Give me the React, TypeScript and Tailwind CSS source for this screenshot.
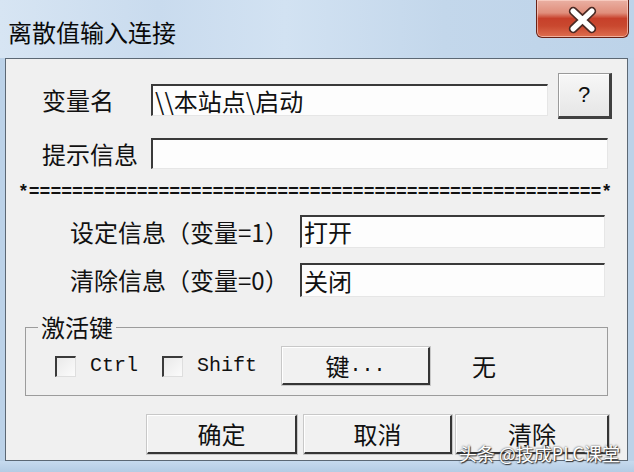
import React from "react";

const cjk = "font-['Noto_Sans_CJK_SC','Noto_Sans',sans-serif]";
const mono = "font-['Liberation_Mono',monospace]";

function Field({ w, h, text }: { w: string; h: string; text?: string }) {
  return (
    <div
      className={`${w} ${h} bg-[#fdfdfd] border-t-2 border-l-2 border-t-[#3a3a3a] border-l-[#3a3a3a] border-b border-r border-b-[#e6e6e6] border-r-[#e6e6e6] flex items-center pl-[2px] overflow-hidden`}
    >
      {text ? <span className="text-[24px] leading-[28px] text-[#111] whitespace-nowrap">{text}</span> : null}
    </div>
  );
}

function Btn({ w, label }: { w: string; label: string }) {
  return (
    <div
      className={`${w} h-[39px] bg-[#f1f1f1] border-t border-l border-t-[#ffffff] border-l-[#ffffff] border-b-2 border-r-2 border-b-[#353535] border-r-[#353535] shadow-[0_0_0_1px_#c8c8c8] flex items-center justify-center text-[24px] leading-[28px] text-[#111]`}
    >
      {label}
    </div>
  );
}

function CheckBox() {
  return (
    <div className="w-[21px] h-[21px] bg-[linear-gradient(135deg,#e9e9e9,#fbfbfb)] border-t-2 border-l-2 border-t-[#3a3a3a] border-l-[#3a3a3a] border-b border-r border-b-[#dedede] border-r-[#dedede]" />
  );
}

export default function App() {
  const sep = "*" + "=".repeat(53) + "*";
  return (
    <div className={`relative w-[634px] h-[472px] overflow-hidden bg-[#bcd2e8] flex flex-col ${cjk} text-[#111]`}>
      {/* Title bar */}
      <div className="h-[58px] flex items-start justify-between bg-[linear-gradient(90deg,#d7e5f3_0%,#c9dbee_25%,#d2e2f2_45%,#c3d7eb_70%,#bdd3e9_100%)]">
        <div className="pl-[8px] pt-[18px] text-[24px] leading-[28px] text-[#0a0a0a] whitespace-nowrap">
          离散值输入连接
        </div>
        <div className="mr-[5px] w-[93px] h-[38px] rounded-b-[6px] border border-t-0 border-[#6a2216] bg-[linear-gradient(180deg,#eab0a3_0%,#e08e7b_35%,#c7402a_50%,#c9482f_70%,#de6e4f_100%)] shadow-[inset_0_0_0_1px_rgba(255,220,210,0.6)] flex items-center justify-center">
          <svg width="93" height="38" viewBox="0 0 93 38">
            <path d="M37 11 L56 29 M56 11 L37 29" stroke="#4a2a24" strokeWidth="9" strokeLinecap="round" fill="none" />
            <path d="M37 11 L56 29 M56 11 L37 29" stroke="#ffffff" strokeWidth="5.5" strokeLinecap="round" fill="none" />
          </svg>
        </div>
      </div>

      {/* Client */}
      <div className="h-[403px] flex pl-[5px] pr-[6px]">
        <div className="flex-1 border border-[#5c6874] bg-[#f0f0f0] flex flex-col">
          {/* Row 1 */}
          <div className="mt-[14px] pl-[36px] flex items-start">
            <div className="w-[109px] h-[32px] mt-[11px] text-[24px] leading-[32px]">变量名</div>
            <div className="mt-[11px]">
              <Field w="w-[397px]" h="h-[32px]" text="\\本站点\启动" />
            </div>
            <div className="ml-[10px] w-[54px] h-[46px] bg-[linear-gradient(180deg,#f7f7f7,#e6e6e6)] border-t border-l border-t-[#9a9a9a] border-l-[#9a9a9a] border-b-[3px] border-r-[3px] border-b-[#404040] border-r-[#404040] shadow-[inset_1px_1px_0_#ffffff] flex items-center justify-center text-[22px] leading-[24px] font-['Liberation_Sans',sans-serif]">
              ?
            </div>
          </div>

          {/* Row 2 */}
          <div className="mt-[19px] pl-[36px] flex items-center">
            <div className="w-[109px] h-[31px] text-[24px] leading-[31px] whitespace-nowrap">提示信息</div>
            <Field w="w-[457px]" h="h-[31px]" />
          </div>

          {/* Separator */}
          <div className={`mt-[12px] pl-[12px] h-[22px] text-[18px] leading-[22px] font-bold ${mono} whitespace-nowrap`}>
            {sep}
          </div>

          {/* Row 3 */}
          <div className="mt-[12px] pl-[64px] flex items-center">
            <div className="w-[230px] text-[24px] leading-[33px] whitespace-nowrap">设定信息（变量=1）</div>
            <Field w="w-[305px]" h="h-[33px]" text="打开" />
          </div>

          {/* Row 4 */}
          <div className="mt-[15px] pl-[64px] flex items-center">
            <div className="w-[230px] text-[24px] leading-[34px] whitespace-nowrap">清除信息（变量=0）</div>
            <Field w="w-[305px]" h="h-[34px]" text="关闭" />
          </div>

          {/* Group box */}
          <fieldset className="mt-[17px] ml-[19px] w-[583px] border border-[#9c9c9c] pb-[10px]">
            <legend className="ml-[12px] px-[3px] text-[24px] leading-[26px]">激活键</legend>
            <div className="mt-[7px] pl-[29px] h-[38px] flex items-center">
              <CheckBox />
              <span className={`ml-[14px] text-[20px] leading-[24px] ${mono}`}>Ctrl</span>
              <div className="ml-[24px]">
                <CheckBox />
              </div>
              <span className={`ml-[14px] text-[20px] leading-[24px] ${mono}`}>Shift</span>
              <div className="ml-[25px] w-[148px] h-[38px] bg-[#f1f1f1] border-t border-l border-t-[#ffffff] border-l-[#ffffff] border-b-2 border-r-2 border-b-[#353535] border-r-[#353535] shadow-[0_0_0_1px_#c8c8c8] flex items-center justify-center">
                <span className="text-[24px] leading-[28px]">键</span>
                <span className={`text-[20px] leading-[28px] ${mono}`}>...</span>
              </div>
              <span className="ml-[42px] text-[24px] leading-[28px]">无</span>
            </div>
          </fieldset>

          {/* Bottom buttons */}
          <div className="mt-[19px] pl-[141px] flex">
            <Btn w="w-[150px]" label="确定" />
            <div className="ml-[7px]">
              <Btn w="w-[148px]" label="取消" />
            </div>
            <div className="ml-[4px]">
              <Btn w="w-[153px]" label="清除" />
            </div>
          </div>
        </div>
      </div>

      {/* Bottom frame */}
      <div className="h-[11px] bg-[linear-gradient(180deg,#c6daee,#b4cce4)]" />

      {/* Watermark */}
      <div className="absolute right-[14px] bottom-[8px] text-[18px] leading-[22px] text-white whitespace-nowrap [text-shadow:0_0_2px_#333,1px_1px_1px_#333]">
        头条 @技成PLC课堂
      </div>
    </div>
  );
}
